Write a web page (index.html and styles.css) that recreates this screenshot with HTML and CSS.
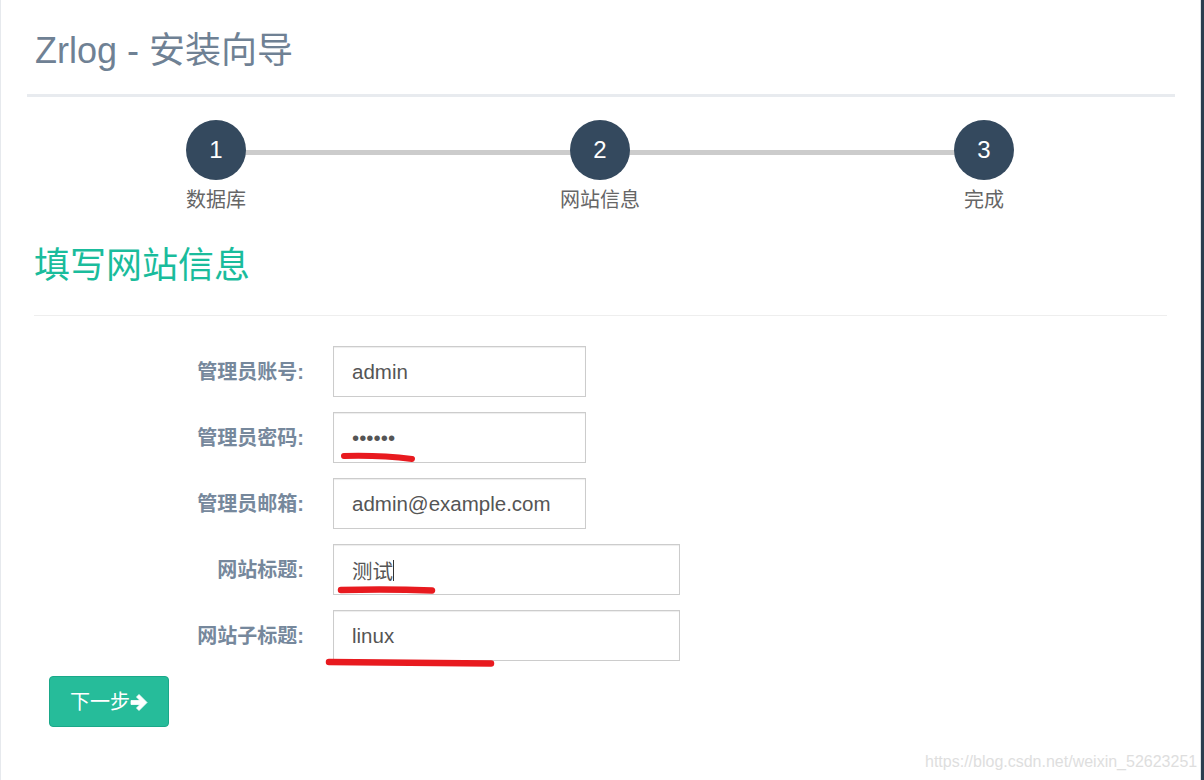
FILE: index.html
```html
<!DOCTYPE html>
<html lang="zh-CN">
<head>
<meta charset="utf-8">
<title>Zrlog - 安装向导</title>
<link rel="stylesheet" href="styles.css">
</head>
<body>
<div class="frame">
  <div class="page">
    <div class="container">
      <header class="header">
        <h1 class="title">Zrlog - 安装向导</h1>
      </header>
      <ol class="steps">
        <li class="step"><span class="step-num">1</span><span class="step-label">数据库</span></li>
        <li class="step"><span class="step-num">2</span><span class="step-label">网站信息</span></li>
        <li class="step"><span class="step-num">3</span><span class="step-label">完成</span></li>
      </ol>
      <section class="panel">
        <h2 class="panel-title">填写网站信息</h2>
        <form class="form">
          <div class="row">
            <label class="label" for="f1">管理员账号:</label>
            <input class="input" id="f1" type="text" value="admin">
          </div>
          <div class="row">
            <label class="label" for="f2">管理员密码:</label>
            <input class="input" id="f2" type="password" value="123456">
          </div>
          <div class="row">
            <label class="label" for="f3">管理员邮箱:</label>
            <input class="input" id="f3" type="text" value="admin@example.com">
          </div>
          <div class="row">
            <label class="label" for="f4">网站标题:</label>
            <input class="input input-wide" id="f4" type="text" value="测试">
          </div>
          <div class="row">
            <label class="label" for="f5">网站子标题:</label>
            <input class="input input-wide" id="f5" type="text" value="linux">
          </div>
          <div class="actions">
            <button class="btn" type="button">下一步<svg class="btn-icon" viewBox="0 0 18 19" width="18" height="19" aria-hidden="true"><path d="M1 7.5h9l-3.5-3.5 2.5-2.5 8 8-8 8-2.5-2.5 3.5-3.5h-9z" fill="#fff" stroke="#fff" stroke-width="0.8" stroke-linejoin="round"/></svg></button>
          </div>
        </form>
      </section>
    </div>
  </div>
  <div class="edge"></div>
</div>

<svg class="annotations" viewBox="0 0 1204 780" width="1204" height="780" aria-hidden="true">
  <line x1="393.5" y1="560" x2="393.5" y2="581" stroke="#333" stroke-width="1"/>
  <path d="M344 456 Q380 455 412 459" fill="none" stroke="#e81a1f" stroke-width="6" stroke-linecap="round"/>
  <path d="M341 590 Q390 589 432 590.5" fill="none" stroke="#e81a1f" stroke-width="6.5" stroke-linecap="round"/>
  <path d="M329 662 Q410 663 491 663.5" fill="none" stroke="#e81a1f" stroke-width="6.5" stroke-linecap="round"/>
</svg>
<div class="watermark">https://blog.csdn.net/weixin_52623251</div>
</body>
</html>
```
FILE: styles.css
```css
html, body {
  margin: 0;
  padding: 0;
  height: 100%;
}
body {
  font-family: "Liberation Sans", "Noto Sans CJK SC", sans-serif;
  background: #fff;
  overflow: hidden;
}
.frame {
  display: flex;
  height: 780px;
}
.page {
  flex: 1;
  border-left: 1px solid #e6e9ed;
  border-right: 1px solid #dfe3e8;
}
.edge {
  width: 3px;
  background: #2c3e50;
}
.container {
  margin: 0 24px 0 23px;
}
.header {
  margin: 0 1px 0 3px;
  padding: 30px 0 22px 8px;
  border-bottom: 3px solid #e8ebef;
}
.title {
  margin: 0;
  font-size: 36px;
  line-height: 42px;
  font-weight: normal;
  color: #6f8194;
}
.steps {
  list-style: none;
  margin: 23px 0 0;
  padding: 0;
  display: grid;
  grid-template-columns: repeat(3, 1fr);
  position: relative;
}
.steps::before {
  content: "";
  position: absolute;
  left: 192px;
  right: 192px;
  top: 30px;
  height: 5px;
  background: #cccccc;
}
.step {
  display: flex;
  flex-direction: column;
  align-items: center;
  position: relative;
}
.step-num {
  width: 60px;
  height: 60px;
  border-radius: 50%;
  background: #34495e;
  color: #fff;
  font-size: 24px;
  line-height: 60px;
  text-align: center;
}
.step-label {
  margin-top: 8px;
  font-size: 20px;
  line-height: 24px;
  color: #666;
}
.panel {
  margin: 0 9px 0 10px;
}
.panel-title {
  margin: 32px 0 0;
  padding-bottom: 27px;
  border-bottom: 1px solid #eeeeee;
  font-size: 36px;
  line-height: 44px;
  font-weight: normal;
  color: #1abc9c;
}
.form {
  padding-top: 30px;
}
.row {
  display: flex;
  align-items: center;
  gap: 29px;
}
.row + .row {
  margin-top: 15px;
}
.label {
  width: 270px;
  text-align: right;
  font-weight: bold;
  font-size: 20px;
  line-height: 24px;
  color: #76889c;
}
.input {
  box-sizing: border-box;
  width: 253px;
  height: 51px;
  margin: 0;
  padding: 0 18px;
  border: 1px solid #cccccc;
  border-radius: 0;
  box-shadow: inset 0 1px 1px rgba(0, 0, 0, 0.075);
  font-family: "Liberation Sans", "Noto Sans CJK SC", sans-serif;
  font-size: 20.5px;
  color: #555;
  background: #fff;
  outline: none;
}
.input-wide {
  width: 347px;
}
.actions {
  margin: 15px 0 0 15px;
}
.btn {
  box-sizing: border-box;
  width: 120px;
  height: 51px;
  padding: 0;
  display: inline-flex;
  align-items: center;
  justify-content: center;
  background: #26bc9a;
  border: 1px solid #1aa889;
  border-radius: 4px;
  color: #fff;
  font-family: "Liberation Sans", "Noto Sans CJK SC", sans-serif;
  font-size: 20px;
  line-height: 24px;
}
.btn-icon {
  display: block;
  margin-top: 2px;
}
.annotations {
  position: absolute;
  left: 0;
  top: 0;
  pointer-events: none;
}
.watermark {
  position: absolute;
  left: 925px;
  top: 753px;
  font-size: 16px;
  line-height: 18px;
  color: #dedede;
  white-space: nowrap;
}
```
